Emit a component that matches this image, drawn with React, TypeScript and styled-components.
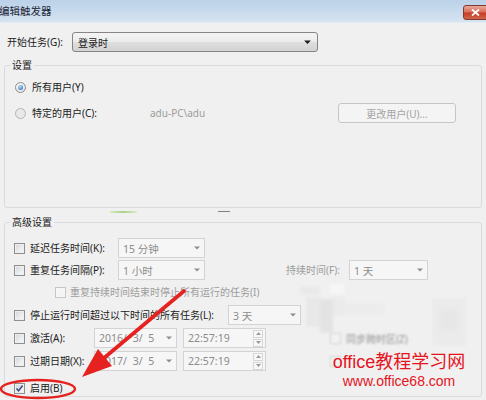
import React from "react";
import styled, { createGlobalStyle } from "styled-components";

const GlobalStyle = createGlobalStyle`
  html, body { margin: 0; padding: 0; }
  body {
    background: #f0f0f0;
    font-family: "Noto Sans", "Noto Sans CJK SC", sans-serif;
    font-size: 10px;
    color: #1b1b1b;
  }
  #root { width: 486px; height: 400px; overflow: hidden; }
`;

const Window = styled.div`
  position: relative;
  width: 486px;
  height: 400px;
  overflow: hidden;
  background: #f0f0f0;
`;

const TitleBar = styled.div`
  height: 22px;
  display: flex;
  align-items: flex-start;
  justify-content: space-between;
  background: linear-gradient(180deg, #bcd2e9 0%, #c8daed 50%, #d6e3f1 100%);
  border-bottom: 1px solid #e3ebf4;
`;

const Title = styled.span`
  margin: 4px 0 0 -1px;
  font-size: 10.5px;
  line-height: 14px;
  color: #1c2534;
`;

const CloseButton = styled.div`
  width: 24px;
  height: 15px;
  margin-top: 5px;
  margin-right: -1px;
  box-sizing: border-box;
  border: 1px solid #7f3a30;
  border-radius: 3px 0 0 3px;
  background: linear-gradient(180deg, #eaa99b 0%, #d9705e 45%, #c63f26 55%, #d0654c 100%);
  display: flex;
  align-items: center;
  justify-content: center;
`;

const Body = styled.div`
  padding: 9px 4px 0 4px;
`;

const StartRow = styled.div`
  display: flex;
  align-items: center;
  height: 20px;
  padding-left: 3px;
`;

const FieldLabel = styled.span<{ $w?: number; $muted?: boolean; $ml?: number }>`
  flex: none;
  width: ${(p) => (p.$w ? `${p.$w}px` : "auto")};
  margin-left: ${(p) => p.$ml ?? 0}px;
  color: ${(p) => (p.$muted ? "#9d9d9d" : "#1b1b1b")};
  white-space: nowrap;
  line-height: 14px;
`;

const DropButton = styled.div<{ $w: number }>`
  flex: none;
  box-sizing: border-box;
  width: ${(p) => p.$w}px;
  height: 20px;
  display: flex;
  align-items: center;
  justify-content: space-between;
  padding: 0 6px 0 5px;
  border: 1px solid #858585;
  border-radius: 3px;
  background: linear-gradient(180deg, #f4f4f4 0%, #ececec 48%, #dedede 52%, #d3d3d3 100%);
  color: #1b1b1b;
`;

const Group = styled.fieldset<{ $h: number; $mt?: number }>`
  box-sizing: border-box;
  height: ${(p) => p.$h}px;
  margin: ${(p) => p.$mt ?? 0}px 0 0 0;
  padding: 0 5px;
  border: 1px solid #d6dbdf;
  border-radius: 3px;
  min-width: 0;
`;

const Legend = styled.legend`
  padding: 0 2px;
  line-height: 14px;
  font-size: 10px;
  color: #1b1b1b;
`;

const Row = styled.div<{ $mt?: number; $pl?: number }>`
  display: flex;
  align-items: center;
  height: 20px;
  margin-top: ${(p) => p.$mt ?? 0}px;
  padding-left: ${(p) => p.$pl ?? 0}px;
`;

const Radio = styled.span<{ $checked?: boolean; $disabled?: boolean }>`
  flex: none;
  width: 11px;
  height: 11px;
  box-sizing: border-box;
  border-radius: 50%;
  border: 1px solid ${(p) => (p.$disabled ? "#b4b4b4" : "#8d8d8d")};
  background: ${(p) =>
    p.$disabled ? "#e9e9e9" : "radial-gradient(circle at 35% 35%, #ffffff, #d8d8d8)"};
  margin-right: 6px;
  display: flex;
  align-items: center;
  justify-content: center;
  &::after {
    content: "";
    width: 5px;
    height: 5px;
    border-radius: 50%;
    background: radial-gradient(circle at 40% 35%, #b8ddff, #1f5fb0);
    display: ${(p) => (p.$checked ? "block" : "none")};
  }
`;

const Check = styled.span<{ $disabled?: boolean; $mr?: number; $blur?: boolean }>`
  flex: none;
  width: 11px;
  height: 11px;
  box-sizing: border-box;
  border: 1px solid ${(p) => (p.$disabled ? "#c6c6c6" : "#8f8f8f")};
  background: ${(p) =>
    p.$disabled ? "#f4f4f4" : "linear-gradient(135deg, #d2d5da 0%, #f1f1f1 70%, #fdfdfd 100%)"};
  box-shadow: inset 0 0 0 1px ${(p) => (p.$disabled ? "#f7f7f7" : "#eceef0")};
  margin-right: ${(p) => p.$mr ?? 5}px;
  display: flex;
  align-items: center;
  justify-content: center;
  filter: ${(p) => (p.$blur ? "blur(0.8px)" : "none")};
  opacity: ${(p) => (p.$blur ? 0.7 : 1)};
`;

const Combo = styled.div<{ $w: number; $ml?: number }>`
  flex: none;
  box-sizing: border-box;
  width: ${(p) => p.$w}px;
  height: 20px;
  margin-left: ${(p) => p.$ml ?? 0}px;
  display: flex;
  align-items: center;
  justify-content: space-between;
  padding: 0 4px 0 4px;
  border: 1px solid #d3d3d3;
  background: #f6f6f6;
  color: #8c8c8c;
  font-size: 10.5px;
  white-space: nowrap;
`;

const DateText = styled.span`
  word-spacing: 3px;
`;

const SpinStack = styled.div`
  display: flex;
  flex-direction: column;
  gap: 1px;
  margin-right: -2px;
`;

const SpinButton = styled.span`
  box-sizing: border-box;
  width: 10px;
  height: 8px;
  border: 1px solid #d6d6d6;
  background: #f8f8f8;
  display: flex;
  align-items: center;
  justify-content: center;
`;

const PushButton = styled.div`
  flex: none;
  box-sizing: border-box;
  width: 118px;
  height: 20px;
  margin-left: auto;
  margin-right: 20px;
  border: 1px solid #c3c7cb;
  border-radius: 3px;
  background: #f4f4f4;
  color: #a3a3a3;
  display: flex;
  align-items: center;
  justify-content: center;
`;

const GroupGap = styled.div`
  height: 7px;
  display: flex;
  align-items: flex-start;
`;

const GreenMark = styled.span`
  margin: 3px 0 0 106px;
  width: 27px;
  height: 2px;
  background: linear-gradient(90deg, #d8ecc0, #a9d188, #dcecc8);
`;

const DarkMark = styled.span`
  margin: 3px 0 0 81px;
  width: 12px;
  height: 1px;
  background: #808080;
`;

const BlurText = styled.span`
  flex: none;
  color: #7a7a7a;
  filter: blur(0.9px);
  opacity: 0.8;
  white-space: nowrap;
`;

const Overlay = styled.svg`
  position: absolute;
  left: 0;
  top: 0;
  pointer-events: none;
`;

const Watermark = styled.div`
  position: absolute;
  left: 329px;
  top: 351px;
  width: 140px;
  display: flex;
  flex-direction: column;
  align-items: center;
  color: #e5141e;
  font-family: "Liberation Sans", "Noto Sans CJK SC", sans-serif;
`;

const WatermarkTitle = styled.span`
  font-size: 18px;
  line-height: 22px;
  white-space: nowrap;
`;

const WatermarkUrl = styled.span`
  font-size: 14px;
  line-height: 16px;
  white-space: nowrap;
`;

const Caret = ({ color = "#8e8e8e", w = 6 }: { color?: string; w?: number }) => (
  <svg width={w} height={w / 2 + 1} viewBox="0 0 6 4">
    <path d="M0 0.5 L6 0.5 L3 3.5 Z" fill={color} />
  </svg>
);

const Spin = () => (
  <SpinStack>
    <SpinButton>
      <svg width="5" height="3" viewBox="0 0 5 3">
        <path d="M0 3 L5 3 L2.5 0 Z" fill="#9a9a9a" />
      </svg>
    </SpinButton>
    <SpinButton>
      <svg width="5" height="3" viewBox="0 0 5 3">
        <path d="M0 0 L5 0 L2.5 3 Z" fill="#9a9a9a" />
      </svg>
    </SpinButton>
  </SpinStack>
);

const CheckMark = () => (
  <svg width="9" height="9" viewBox="0 0 9 9">
    <path d="M1.5 4.5 L3.6 6.8 L7.6 1.6" fill="none" stroke="#3a4f86" strokeWidth="1.6" />
  </svg>
);

const mosaic: [number, number, number, number, string][] = [
  [300, 286, 20, 9, "#e6e6e6"],
  [330, 284, 14, 10, "#fbfbfb"],
  [306, 297, 14, 30, "#e3e3e3"],
  [320, 299, 13, 34, "#dcdcdc"],
  [333, 296, 12, 20, "#e8e8e8"],
  [345, 303, 40, 12, "#ebebeb"],
  [432, 298, 34, 48, "#e8e8e8"],
  [440, 310, 18, 20, "#e2e2e2"],
];

export default function App() {
  return (
    <>
      <GlobalStyle />
      <Window>
        <TitleBar>
          <Title>编辑触发器</Title>
          <CloseButton>
            <svg width="9" height="7" viewBox="0 0 9 7">
              <path d="M1 0.5 L8 6.5 M8 0.5 L1 6.5" stroke="#fff" strokeWidth="1.8" />
            </svg>
          </CloseButton>
        </TitleBar>
        <Body>
          <StartRow>
            <FieldLabel $w={65}>开始任务(G):</FieldLabel>
            <DropButton $w={246}>
              <span>登录时</span>
              <Caret color="#1a1a1a" w={7} />
            </DropButton>
          </StartRow>

          <Group $h={150} $mt={6}>
            <Legend>设置</Legend>
            <Row $mt={5} $pl={5}>
              <Radio $checked />
              <FieldLabel>所有用户(Y)</FieldLabel>
            </Row>
            <Row $mt={6} $pl={5}>
              <Radio $disabled />
              <FieldLabel $w={118}>特定的用户(C):</FieldLabel>
              <FieldLabel $muted>adu-PC\adu</FieldLabel>
              <PushButton>更改用户(U)...</PushButton>
            </Row>
          </Group>

          <GroupGap>
            <GreenMark />
            <DarkMark />
          </GroupGap>

          <Group $h={182}>
            <Legend>高级设置</Legend>
            <Row $mt={9} $pl={4}>
              <Check />
              <FieldLabel $w={88}>延迟任务时间(K):</FieldLabel>
              <Combo $w={87}>
                <span>15 分钟</span>
                <Caret />
              </Combo>
            </Row>
            <Row $mt={2} $pl={4}>
              <Check />
              <FieldLabel $w={88}>重复任务间隔(P):</FieldLabel>
              <Combo $w={87}>
                <span>1 小时</span>
                <Caret />
              </Combo>
              <FieldLabel $muted $w={63} $ml={81}>
                持续时间(F):
              </FieldLabel>
              <Combo $w={79}>
                <span>1 天</span>
                <Caret />
              </Combo>
            </Row>
            <Row $mt={2} $pl={45}>
              <Check $disabled $mr={4} />
              <FieldLabel $muted>重复持续时间结束时停止所有运行的任务(I)</FieldLabel>
            </Row>
            <Row $mt={3} $pl={4}>
              <Check />
              <FieldLabel $w={198}>停止运行时间超过以下时间的所有任务(L):</FieldLabel>
              <Combo $w={73}>
                <span>3 天</span>
                <Caret />
              </Combo>
            </Row>
            <Row $mt={3} $pl={4}>
              <Check />
              <FieldLabel $w={64}>激活(A):</FieldLabel>
              <Combo $w={83}>
                <DateText>2016/ 3/ 5</DateText>
                <Caret />
              </Combo>
              <Combo $w={83} $ml={6}>
                <span>22:57:19</span>
                <Spin />
              </Combo>
              <FieldLabel $ml={64} />
              <Check $disabled $blur />
              <BlurText>同步跨时区(Z)</BlurText>
            </Row>
            <Row $mt={3} $pl={4}>
              <Check />
              <FieldLabel $w={64}>过期日期(X):</FieldLabel>
              <Combo $w={83}>
                <DateText>2017/ 3/ 5</DateText>
                <Caret />
              </Combo>
              <Combo $w={83} $ml={6}>
                <span>22:57:19</span>
                <Spin />
              </Combo>
              <FieldLabel $ml={64} />
              <Check $disabled $blur />
            </Row>
            <Row $mt={7} $pl={4}>
              <Check>
                <CheckMark />
              </Check>
              <FieldLabel>启用(B)</FieldLabel>
            </Row>
          </Group>
        </Body>

        <Overlay width="486" height="400" viewBox="0 0 486 400">
          <defs>
            <filter id="soft" x="-20%" y="-20%" width="140%" height="140%">
              <feGaussianBlur stdDeviation="1.4" />
            </filter>
          </defs>
          <g filter="url(#soft)" opacity="0.6">
            {mosaic.map(([x, y, w, h, c], i) => (
              <rect key={i} x={x} y={y} width={w} height={h} fill={c} />
            ))}
          </g>
          <path d="M184 291 L104 358" stroke="#e5221f" strokeWidth="3.6" strokeLinecap="round" />
          <path d="M82 377 L112 366 L98 349 Z" fill="#e5221f" />
          <ellipse cx="38" cy="389" rx="37" ry="9" fill="none" stroke="#e5221f" strokeWidth="2.4" />
        </Overlay>

        <Watermark>
          <WatermarkTitle>office教程学习网</WatermarkTitle>
          <WatermarkUrl>www.office68.com</WatermarkUrl>
        </Watermark>
      </Window>
    </>
  );
}
